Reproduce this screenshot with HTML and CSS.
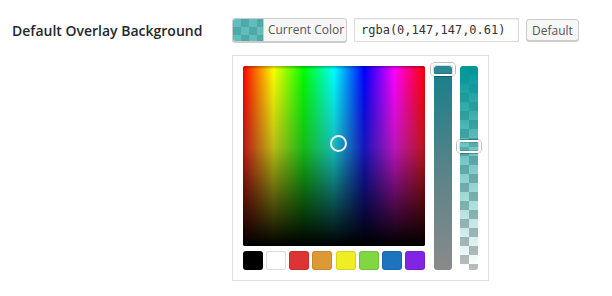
FILE: index.html
```html
<!DOCTYPE html>
<html>
<head>
<meta charset="utf-8">
<link rel="stylesheet" href="styles.css">
</head>
<body>
<div class="row">
  <div class="label">Default Overlay Background</div>
  <div class="field">
    <div class="controls">
      <button class="current"><span class="swatch"></span><span class="current-text">Current Color</span></button>
      <input class="value" type="text" value="rgba(0,147,147,0.61)">
      <button class="default">Default</button>
    </div>
    <div class="picker">
      <div class="main">
        <div class="square">
          <div class="square-dark"></div>
          <span class="circle"></span>
        </div>
        <div class="palette">
          <span class="chip chip-black"></span>
          <span class="chip chip-white"></span>
          <span class="chip chip-red"></span>
          <span class="chip chip-orange"></span>
          <span class="chip chip-yellow"></span>
          <span class="chip chip-green"></span>
          <span class="chip chip-blue"></span>
          <span class="chip chip-purple"></span>
        </div>
      </div>
      <div class="slider slider-sat"><span class="handle handle-top"></span></div>
      <div class="slider slider-alpha"><span class="handle handle-alpha"></span></div>
    </div>
  </div>
</div>
</body>
</html>
```
FILE: styles.css
```css
html, body {
  margin: 0;
  background: #fff;
}
body {
  font-family: "Open Sans", "Liberation Sans", sans-serif;
  color: #222;
}
.row {
  display: flex;
  padding: 18px 0 0 12px;
}
.label {
  width: 220px;
  font-size: 14px;
  font-weight: 600;
  line-height: 20px;
  padding-top: 3px;
  color: #23282d;
}
.field {
  display: flex;
  flex-direction: column;
}
.controls {
  display: flex;
  align-items: center;
  height: 24px;
}
.current {
  display: flex;
  align-items: stretch;
  box-sizing: border-box;
  width: 115px;
  height: 24px;
  padding: 0;
  border: 1px solid #ccc;
  border-radius: 3px;
  background: #f7f7f7;
  box-shadow: 0 1px 0 #ccc;
  font-family: "Open Sans", "Liberation Sans", sans-serif;
  font-size: 12px;
  color: #555;
  overflow: hidden;
}
.swatch {
  width: 30px;
  border-right: 1px solid #ccc;
  background:
    linear-gradient(rgba(0,147,147,0.61), rgba(0,147,147,0.61)),
    conic-gradient(#ccc 25%, #fff 0 50%, #ccc 0 75%, #fff 0) 0 0 / 16px 16px;
}
.current-text {
  flex: 1;
  line-height: 22px;
  text-align: center;
  padding-left: 2px;
}
.value {
  box-sizing: border-box;
  margin-left: 7px;
  width: 165px;
  height: 24px;
  padding: 0 6px;
  border: 1px solid #ddd;
  box-shadow: inset 0 1px 2px rgba(0,0,0,0.07);
  font-family: "DejaVu Sans Mono", "Liberation Mono", monospace;
  font-size: 12px;
  color: #333;
  outline: none;
}
.default {
  box-sizing: border-box;
  margin-left: 7px;
  width: 53px;
  height: 22px;
  padding: 0;
  border: 1px solid #ccc;
  border-radius: 3px;
  background: #f7f7f7;
  box-shadow: 0 1px 0 #ccc;
  font-family: "Open Sans", "Liberation Sans", sans-serif;
  font-size: 12px;
  color: #555;
}
.picker {
  display: flex;
  gap: 8px;
  box-sizing: border-box;
  margin-top: 13px;
  width: 257px;
  height: 226px;
  padding: 10px;
  border: 1px solid #dedede;
  background: #fff;
}
.main {
  display: flex;
  flex-direction: column;
  width: 182px;
  margin-right: 1px;
}
.square {
  position: relative;
  height: 181px;
  border-radius: 2px;
  overflow: hidden;
  background: linear-gradient(to right, #f00, #ff0 16.7%, #0f0 33.3%, #0ff 50%, #00f 66.7%, #f0f 83.3%, #f00);
}
.square-dark {
  position: absolute;
  inset: 0;
  background: linear-gradient(to bottom, rgba(0,0,0,0) 0%, rgba(60,60,60,0.35) 45%, #000 100%);
  box-shadow: inset 0 2px 2px rgba(0,0,0,0.25);
}
.circle {
  position: absolute;
  left: 87px;
  top: 69px;
  width: 13px;
  height: 13px;
  border: 2.5px solid #eee;
  border-radius: 50%;
}
.palette {
  display: flex;
  justify-content: space-between;
  margin-top: 5px;
}
.chip {
  box-sizing: border-box;
  width: 20px;
  height: 19px;
  border-radius: 3px;
  box-shadow: inset 0 0 0 1px rgba(0,0,0,0.1);
}
.chip-black { background: #000; }
.chip-white { background: #fff; box-shadow: inset 0 0 0 1px #ddd; }
.chip-red { background: #dd3333; }
.chip-orange { background: #dd9933; }
.chip-yellow { background: #eeee22; }
.chip-green { background: #81d742; }
.chip-blue { background: #1e73be; }
.chip-purple { background: #8224e3; }
.slider {
  position: relative;
  width: 18px;
  height: 204px;
  border-radius: 3px;
}
.slider-sat {
  background: linear-gradient(to bottom, #157e8c, #5d8488 55%, #8a8a8a);
}
.slider-alpha {
  background:
    linear-gradient(to bottom, rgba(0,150,150,1), rgba(0,150,150,0.55) 45%, rgba(0,150,150,0)),
    conic-gradient(#bbb 25%, #fff 0 50%, #bbb 0 75%, #fff 0) 0 0 / 18px 18px;
}
.handle {
  position: absolute;
  left: -3px;
  box-sizing: border-box;
  width: 24px;
  height: 13px;
  border: 2px solid #fff;
  border-radius: 4px;
  background: rgba(255,255,255,0.08);
  box-shadow: 0 0 0 1px rgba(0,0,0,0.25), inset 0 0 0 1px rgba(0,0,0,0.15);
  z-index: 1;
}
.handle-top {
  top: -3px;
}
.handle-alpha {
  top: 74px;
}
```
